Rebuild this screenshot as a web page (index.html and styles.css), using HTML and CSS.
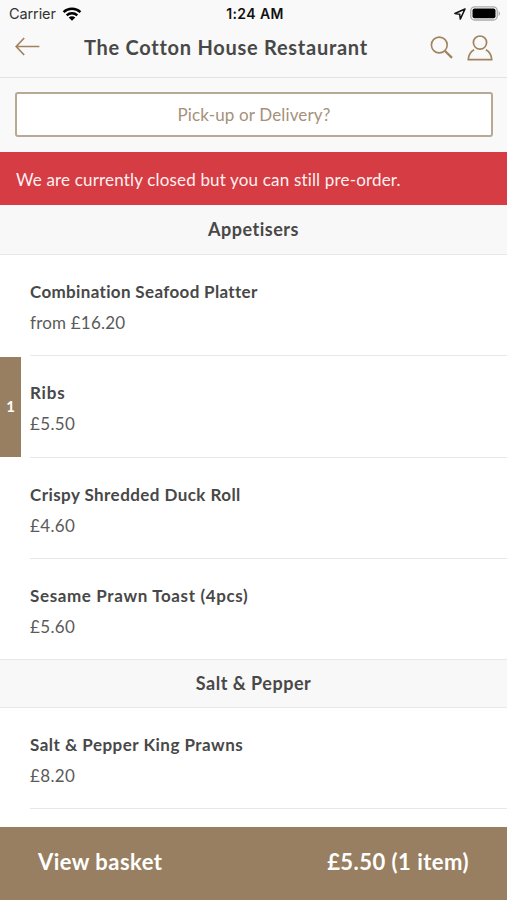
FILE: index.html
```html
<!DOCTYPE html>
<html lang="en">
<head>
<meta charset="utf-8">
<title>The Cotton House Restaurant</title>
<link rel="stylesheet" href="styles.css">
</head>
<body>
<div class="app">
  <header class="top">
    <div class="status">
      <div class="carrier"><span>Carrier</span>
        <svg width="20" height="14" viewBox="0 0 20 14" fill="none" stroke="#000" stroke-width="2.5"><path d="M1.6 5.2C6.2.7 13.8.7 18.4 5.2M4.7 8.4c3-2.8 7.6-2.8 10.6 0"/><path d="M10 13.7 6.7 10.4c1.9-1.7 4.7-1.7 6.6 0z" fill="#000" stroke="none"/></svg>
      </div>
      <div class="clock">1:24 AM</div>
      <div class="indicators">
        <svg width="12" height="12" viewBox="0 0 12 12" fill="none" stroke="#111" stroke-width="1.5" stroke-linejoin="round"><path d="M11 1 .9 5.5l4.8.7.6 4.9z"/></svg>
        <svg width="31" height="15" viewBox="0 0 31 15"><rect x=".8" y=".8" width="26.4" height="13.2" rx="3.8" fill="#fafafa" stroke="#aaa" stroke-width="1.3"/><rect x="2.5" y="2.5" width="23" height="9.8" rx="2" fill="#000"/><path d="M28.6 5v5c1.8-.7 1.8-4.3 0-5z" fill="#aaa"/></svg>
      </div>
    </div>
    <div class="nav">
      <svg class="back" width="25" height="19" viewBox="0 0 25 19" fill="none" stroke="#a18360" stroke-width="1.7"><path d="M9.2 1 1.2 9.5l8 8.5M1.4 9.5h23"/></svg>
      <h1>The Cotton House Restaurant</h1>
      <div class="actions">
        <svg width="23" height="23" viewBox="0 0 23 23" fill="none" stroke="#a18360"><circle cx="9.3" cy="9" r="7.9" stroke-width="1.6"/><path d="m15 15 7 6.8" stroke-width="2.4"/></svg>
        <svg width="26" height="26" viewBox="0 0 26 26" fill="none" stroke="#a18360" stroke-width="1.7"><circle cx="13" cy="7.6" r="6.6"/><path d="M7.1 14.8C3.6 16.7 1.6 20 1.3 24.6h23.4c-.3-4.6-2.3-7.9-5.8-9.8"/></svg>
      </div>
    </div>
  </header>
  <div class="mode"><button class="mode-button">Pick-up or Delivery?</button></div>
  <div class="notice"><span>We are currently closed but you can still pre-order.</span></div>
  <main class="menu">
    <h2 class="section">Appetisers</h2>
    <div class="item"><div class="info"><h3>Combination Seafood Platter</h3><p class="from">from £16.20</p></div></div>
    <div class="item"><div class="count">1</div><div class="info"><h3 class="ribs">Ribs</h3><p>£5.50</p></div></div>
    <div class="item"><div class="info"><h3 class="duck">Crispy Shredded Duck Roll</h3><p>£4.60</p></div></div>
    <div class="item last"><div class="info"><h3 class="toast">Sesame Prawn Toast (4pcs)</h3><p>£5.60</p></div></div>
    <h2 class="section second">Salt &amp; Pepper</h2>
    <div class="item"><div class="info"><h3 class="prawns">Salt &amp; Pepper King Prawns</h3><p>£8.20</p></div></div>
  </main>
  <footer class="basket"><span>View basket</span><span>£5.50 (1 item)</span></footer>
</div>
</body>
</html>
```
FILE: styles.css
```css
* { box-sizing: border-box; }
body { margin: 0; font-family: Lato, "Noto Sans", sans-serif; color: #484848; background: #fff; }
h1, h2, h3, p { margin: 0; }
svg { display: block; flex: none; }
.app { display: flex; flex-direction: column; width: 507px; height: 900px; overflow: hidden; white-space: nowrap; }
.top { flex: none; height: 78px; background: #f9f9f9; border-bottom: 1px solid #e3e3e3; }
.status { display: grid; grid-template-columns: 1fr auto 1fr; height: 27px; align-items: center; padding: 0 6px 0 9px; font: 14.5px Inter, sans-serif; color: #333; }
.carrier { display: flex; align-items: center; gap: 6px; letter-spacing: -.1px; }
.clock { font-weight: 600; font-size: 14px; letter-spacing: .4px; color: #111; }
.indicators { display: flex; justify-content: flex-end; align-items: center; gap: 4px; }
.nav { display: grid; grid-template-columns: 69px 1fr auto; height: 41px; align-items: center; padding: 0 14px 0 15px; }
h1 { position: relative; top: -1px; font-size: 20px; line-height: 28px; font-weight: 700; letter-spacing: .73px; }
.back { position: relative; top: -1px; }
.actions { display: flex; align-items: center; gap: 14px; }
.mode { flex: none; height: 74px; padding: 14px 15px 0; background: #f9f9f9; }
.mode-button { display: block; width: 478px; height: 45px; padding: 0; border: 2px solid #b9a893; border-radius: 3px; background: #fff; color: #a5917a; font: 17px Lato, sans-serif; letter-spacing: .14px; }
.notice { flex: none; display: flex; align-items: center; height: 53px; padding: 2px 16px 0; background: #d53c43; color: #fff0ef; font-size: 17px; letter-spacing: .17px; }
.menu { flex: 1; min-height: 0; overflow: hidden; }
.section { height: 50px; border-bottom: 1px solid #e8e8e8; background: #f8f8f8; text-align: center; font-size: 18px; line-height: 49px; letter-spacing: .5px; }
.section.second { height: 49px; border-top: 1px solid #e8e8e8; line-height: 47px; }
.item { position: relative; height: 101.4px; padding-left: 30px; }
.info { height: 100%; padding-top: 25px; border-bottom: 1.5px solid #e8e8e8; }
.last .info { border-bottom: 0; }
.last { height: 99.6px; }
h3 { font-size: 17px; line-height: 24px; letter-spacing: .34px; }
.ribs { letter-spacing: .8px; }
.duck { letter-spacing: .43px; }
.toast { letter-spacing: .63px; }
.prawns { letter-spacing: .48px; }
p { margin-top: 6px; font-size: 17px; line-height: 25px; letter-spacing: .35px; color: #5a5a5a; }
.from { letter-spacing: .2px; }
.count { position: absolute; left: 0; top: 1px; width: 21px; height: 100px; background: #997f61; color: #fff; font-size: 15px; font-weight: 700; line-height: 99px; text-align: center; }
.basket { flex: none; display: flex; justify-content: space-between; height: 73px; padding: 0 38px; background: #997f61; color: #fff; font-size: 22px; font-weight: 700; line-height: 70px; letter-spacing: .47px; }
```
